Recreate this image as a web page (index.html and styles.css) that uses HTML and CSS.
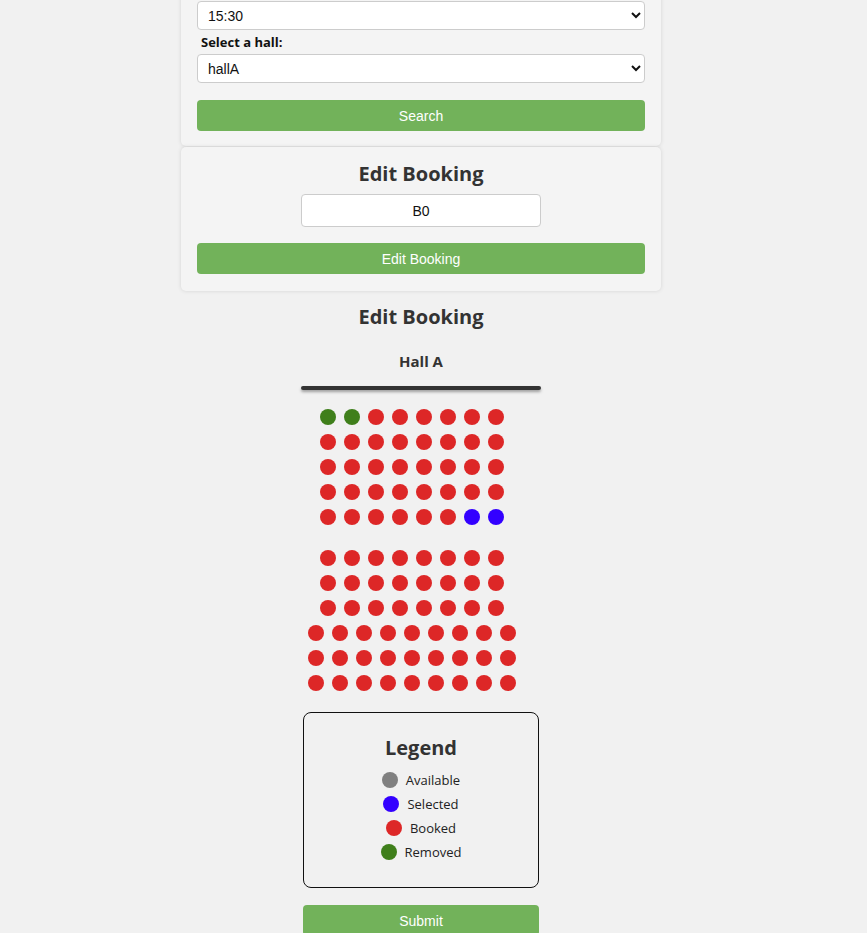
FILE: index.html
```html
<!DOCTYPE html>
<html lang="en">
<head>
<meta charset="utf-8">
<title>Edit Booking</title>
<link rel="stylesheet" href="styles.css">
</head>
<body>
<div class="page">
  <div class="card card-search">
    <select class="field select">
      <option>15:30</option>
    </select>
    <label class="label">Select a hall:</label>
    <select class="field select">
      <option>hallA</option>
    </select>
    <button class="btn btn-full btn-search">Search</button>
  </div>

  <div class="card card-edit">
    <h2 class="heading">Edit Booking</h2>
    <input class="field input" type="text" value="B0">
    <button class="btn btn-full btn-edit">Edit Booking</button>
  </div>

  <h2 class="heading heading-main">Edit Booking</h2>
  <h3 class="hall-name">Hall A</h3>
  <div class="screen"></div>

  <div class="seat-map">
    <div class="section">
      <div class="row"><span class="seat removed"></span><span class="seat removed"></span><span class="seat booked"></span><span class="seat booked"></span><span class="seat booked"></span><span class="seat booked"></span><span class="seat booked"></span><span class="seat booked"></span></div>
      <div class="row"><span class="seat booked"></span><span class="seat booked"></span><span class="seat booked"></span><span class="seat booked"></span><span class="seat booked"></span><span class="seat booked"></span><span class="seat booked"></span><span class="seat booked"></span></div>
      <div class="row"><span class="seat booked"></span><span class="seat booked"></span><span class="seat booked"></span><span class="seat booked"></span><span class="seat booked"></span><span class="seat booked"></span><span class="seat booked"></span><span class="seat booked"></span></div>
      <div class="row"><span class="seat booked"></span><span class="seat booked"></span><span class="seat booked"></span><span class="seat booked"></span><span class="seat booked"></span><span class="seat booked"></span><span class="seat booked"></span><span class="seat booked"></span></div>
      <div class="row"><span class="seat booked"></span><span class="seat booked"></span><span class="seat booked"></span><span class="seat booked"></span><span class="seat booked"></span><span class="seat booked"></span><span class="seat selected"></span><span class="seat selected"></span></div>
    </div>
    <div class="section">
      <div class="row"><span class="seat booked"></span><span class="seat booked"></span><span class="seat booked"></span><span class="seat booked"></span><span class="seat booked"></span><span class="seat booked"></span><span class="seat booked"></span><span class="seat booked"></span></div>
      <div class="row"><span class="seat booked"></span><span class="seat booked"></span><span class="seat booked"></span><span class="seat booked"></span><span class="seat booked"></span><span class="seat booked"></span><span class="seat booked"></span><span class="seat booked"></span></div>
      <div class="row"><span class="seat booked"></span><span class="seat booked"></span><span class="seat booked"></span><span class="seat booked"></span><span class="seat booked"></span><span class="seat booked"></span><span class="seat booked"></span><span class="seat booked"></span></div>
      <div class="row"><span class="seat booked"></span><span class="seat booked"></span><span class="seat booked"></span><span class="seat booked"></span><span class="seat booked"></span><span class="seat booked"></span><span class="seat booked"></span><span class="seat booked"></span><span class="seat booked"></span></div>
      <div class="row"><span class="seat booked"></span><span class="seat booked"></span><span class="seat booked"></span><span class="seat booked"></span><span class="seat booked"></span><span class="seat booked"></span><span class="seat booked"></span><span class="seat booked"></span><span class="seat booked"></span></div>
      <div class="row"><span class="seat booked"></span><span class="seat booked"></span><span class="seat booked"></span><span class="seat booked"></span><span class="seat booked"></span><span class="seat booked"></span><span class="seat booked"></span><span class="seat booked"></span><span class="seat booked"></span></div>
    </div>
  </div>

  <div class="legend">
    <h2 class="heading">Legend</h2>
    <div class="legend-item"><span class="seat available"></span><span>Available</span></div>
    <div class="legend-item"><span class="seat selected"></span><span>Selected</span></div>
    <div class="legend-item"><span class="seat booked"></span><span>Booked</span></div>
    <div class="legend-item"><span class="seat removed"></span><span>Removed</span></div>
  </div>

  <button class="btn btn-submit">Submit</button>
</div>
</body>
</html>
```

FILE: styles.css
```css
* { box-sizing: border-box; }

html, body {
  margin: 0;
  padding: 0;
  background: #f1f1f1;
  font-family: "Open Sans", "Noto Sans", sans-serif;
  color: #222;
}

.page {
  width: 842px;
  display: flex;
  flex-direction: column;
  align-items: center;
}

.card {
  width: 480px;
  background: #f4f4f4;
  border-radius: 5px;
  box-shadow: 0 0 4px rgba(0, 0, 0, 0.12);
  padding: 0 16px;
  display: flex;
  flex-direction: column;
  align-items: center;
}

.card-search {
  margin-top: -20px;
  padding-top: 21px;
  padding-bottom: 15px;
  align-items: stretch;
}

.card-edit {
  margin-top: 1px;
  padding-top: 16px;
  padding-bottom: 17px;
}

.field {
  font-family: "Liberation Sans", Arial, sans-serif;
  font-size: 14px;
  color: #111;
  background: #fff;
  border: 1px solid #ccc;
  border-radius: 4px;
}

.select {
  height: 29px;
  width: 448px;
  padding: 0 6px;
}

.label {
  display: block;
  font-size: 13px;
  font-weight: 700;
  line-height: 14px;
  margin: 5px 0 5px 4px;
  color: #111;
}

.btn {
  display: block;
  height: 31px;
  border: none;
  border-radius: 4px;
  background: #72b25a;
  color: #fff;
  font-family: "Liberation Sans", Arial, sans-serif;
  font-size: 14px;
  padding: 0;
}

.btn-full { width: 448px; }

.btn-search { margin-top: 17px; }

.heading {
  margin: 0;
  font-size: 20px;
  line-height: 22px;
  font-weight: 700;
  color: #333;
}

.input {
  width: 240px;
  height: 33px;
  margin-top: 9px;
  text-align: center;
}

.btn-edit { margin-top: 16px; }

.heading-main { margin-top: 15px; }

.hall-name {
  margin: 24px 0 0;
  font-size: 15px;
  line-height: 18px;
  font-weight: 700;
  color: #333;
}

.screen {
  width: 240px;
  height: 4px;
  margin-top: 16px;
  background: #333;
  border-radius: 2px;
  box-shadow: 0 2px 3px rgba(0, 0, 0, 0.35);
}

.seat-map {
  margin-top: 19px;
  padding-right: 18px;
  display: flex;
  flex-direction: column;
  align-items: center;
  gap: 16px;
}

.section {
  display: flex;
  flex-direction: column;
  align-items: center;
}

.row {
  display: flex;
}

.row .seat {
  margin: 0 4px 9px;
}

.seat {
  display: block;
  width: 16px;
  height: 16px;
  border-radius: 50%;
  flex: none;
}

.booked { background: #dd2727; }
.removed { background: #3f7f1b; }
.selected { background: #3300ff; }
.available { background: #808080; }

.legend {
  width: 236px;
  margin-top: 12px;
  border: 1px solid #111;
  border-radius: 8px;
  padding: 24px 0 23px;
  display: flex;
  flex-direction: column;
  align-items: center;
}

.legend .heading { margin-bottom: 9px; }

.legend-item {
  display: flex;
  align-items: center;
  gap: 8px;
  height: 24px;
  font-size: 13px;
  color: #222;
}

.btn-submit {
  width: 236px;
  margin-top: 17px;
}
```
